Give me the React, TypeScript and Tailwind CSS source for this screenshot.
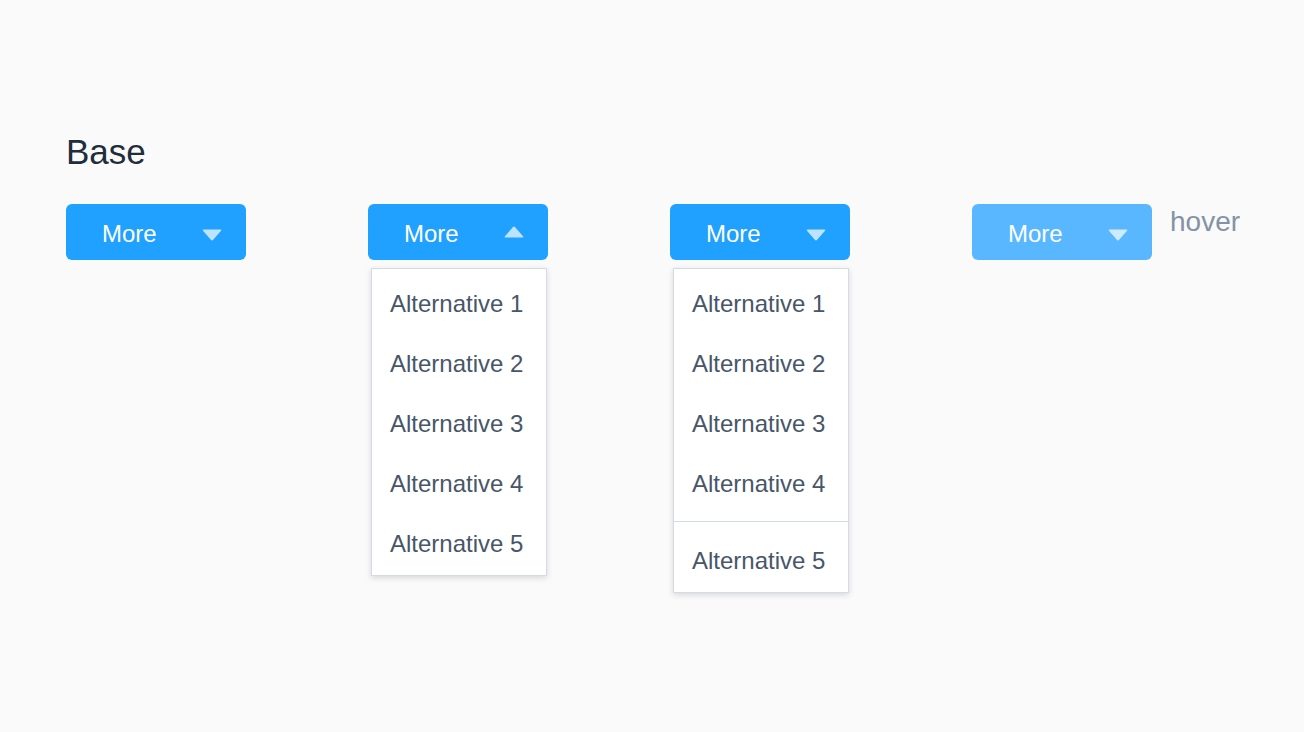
import React from "react";

const items = ["Alternative 1", "Alternative 2", "Alternative 3", "Alternative 4", "Alternative 5"];

function Caret({ up = false }: { up?: boolean }) {
    return (
        <svg width="20" height="12" viewBox="0 0 20 12" className={up ? "rotate-180" : ""}>
            <path d="M1.5 0.5 H18.5 Q20 0.5 19 1.8 L11.2 10.8 Q10 12 8.8 10.8 L1 1.8 Q0 0.5 1.5 0.5 Z" fill="rgba(255,255,255,0.7)" />
        </svg>
    );
}

function MoreButton({ up = false, hover = false }: { up?: boolean; hover?: boolean }) {
    return (
        <button
            className={
                "flex h-[56px] w-[180px] items-center rounded-[6px] pl-[36px] pr-[24px] text-[24px] text-white " +
                (hover ? "bg-[#58b7ff]" : "bg-[#20a0ff]")
            }>
            <span className="mt-[3px] flex-1 text-left">More</span>
            <span className={up ? "mt-0" : "mt-[5px]"}>
                <Caret up={up} />
            </span>
        </button>
    );
}

function Item({ label }: { label: string }) {
    return <div className="h-[60px] pl-[18px] pt-[19px] text-[24px] leading-[24px] text-[#475669]">{label}</div>;
}

function Menu({ divided = false }: { divided?: boolean }) {
    return (
        <div className="ml-[3px] mt-[8px] w-[176px] border border-[#d3dce6] bg-white shadow-[0_2px_6px_rgba(0,0,0,0.14)]">
            {divided ? (
                <>
                    <div className="pb-[8px] pt-[4px]">
                        {items.slice(0, 4).map((it) => (
                            <Item key={it} label={it} />
                        ))}
                    </div>
                    <div className="border-t border-[#d3dce6] pb-[2px] pt-[8px]">
                        <Item label={items[4]} />
                    </div>
                </>
            ) : (
                <div className="pb-[2px] pt-[4px]">
                    {items.map((it) => (
                        <Item key={it} label={it} />
                    ))}
                </div>
            )}
        </div>
    );
}

export default function App() {
    return (
        <div className="min-h-[732px] bg-[#fafafa] pl-[66px] pt-[134px] font-['Liberation_Sans',Arial,sans-serif]">
            <h1 className="text-[35px] leading-none text-[#1f2d3d]">Base</h1>

            <div className="mt-[35px] flex items-start gap-[122px]">
                <div>
                    <MoreButton />
                </div>
                <div>
                    <MoreButton up />
                    <Menu />
                </div>
                <div>
                    <MoreButton />
                    <Menu divided />
                </div>
                <div className="flex items-start gap-[18px]">
                    <MoreButton hover />
                    <span className="mt-[4px] text-[28px] leading-none text-[#8492a6]">hover</span>
                </div>
            </div>
        </div>
    );
}
